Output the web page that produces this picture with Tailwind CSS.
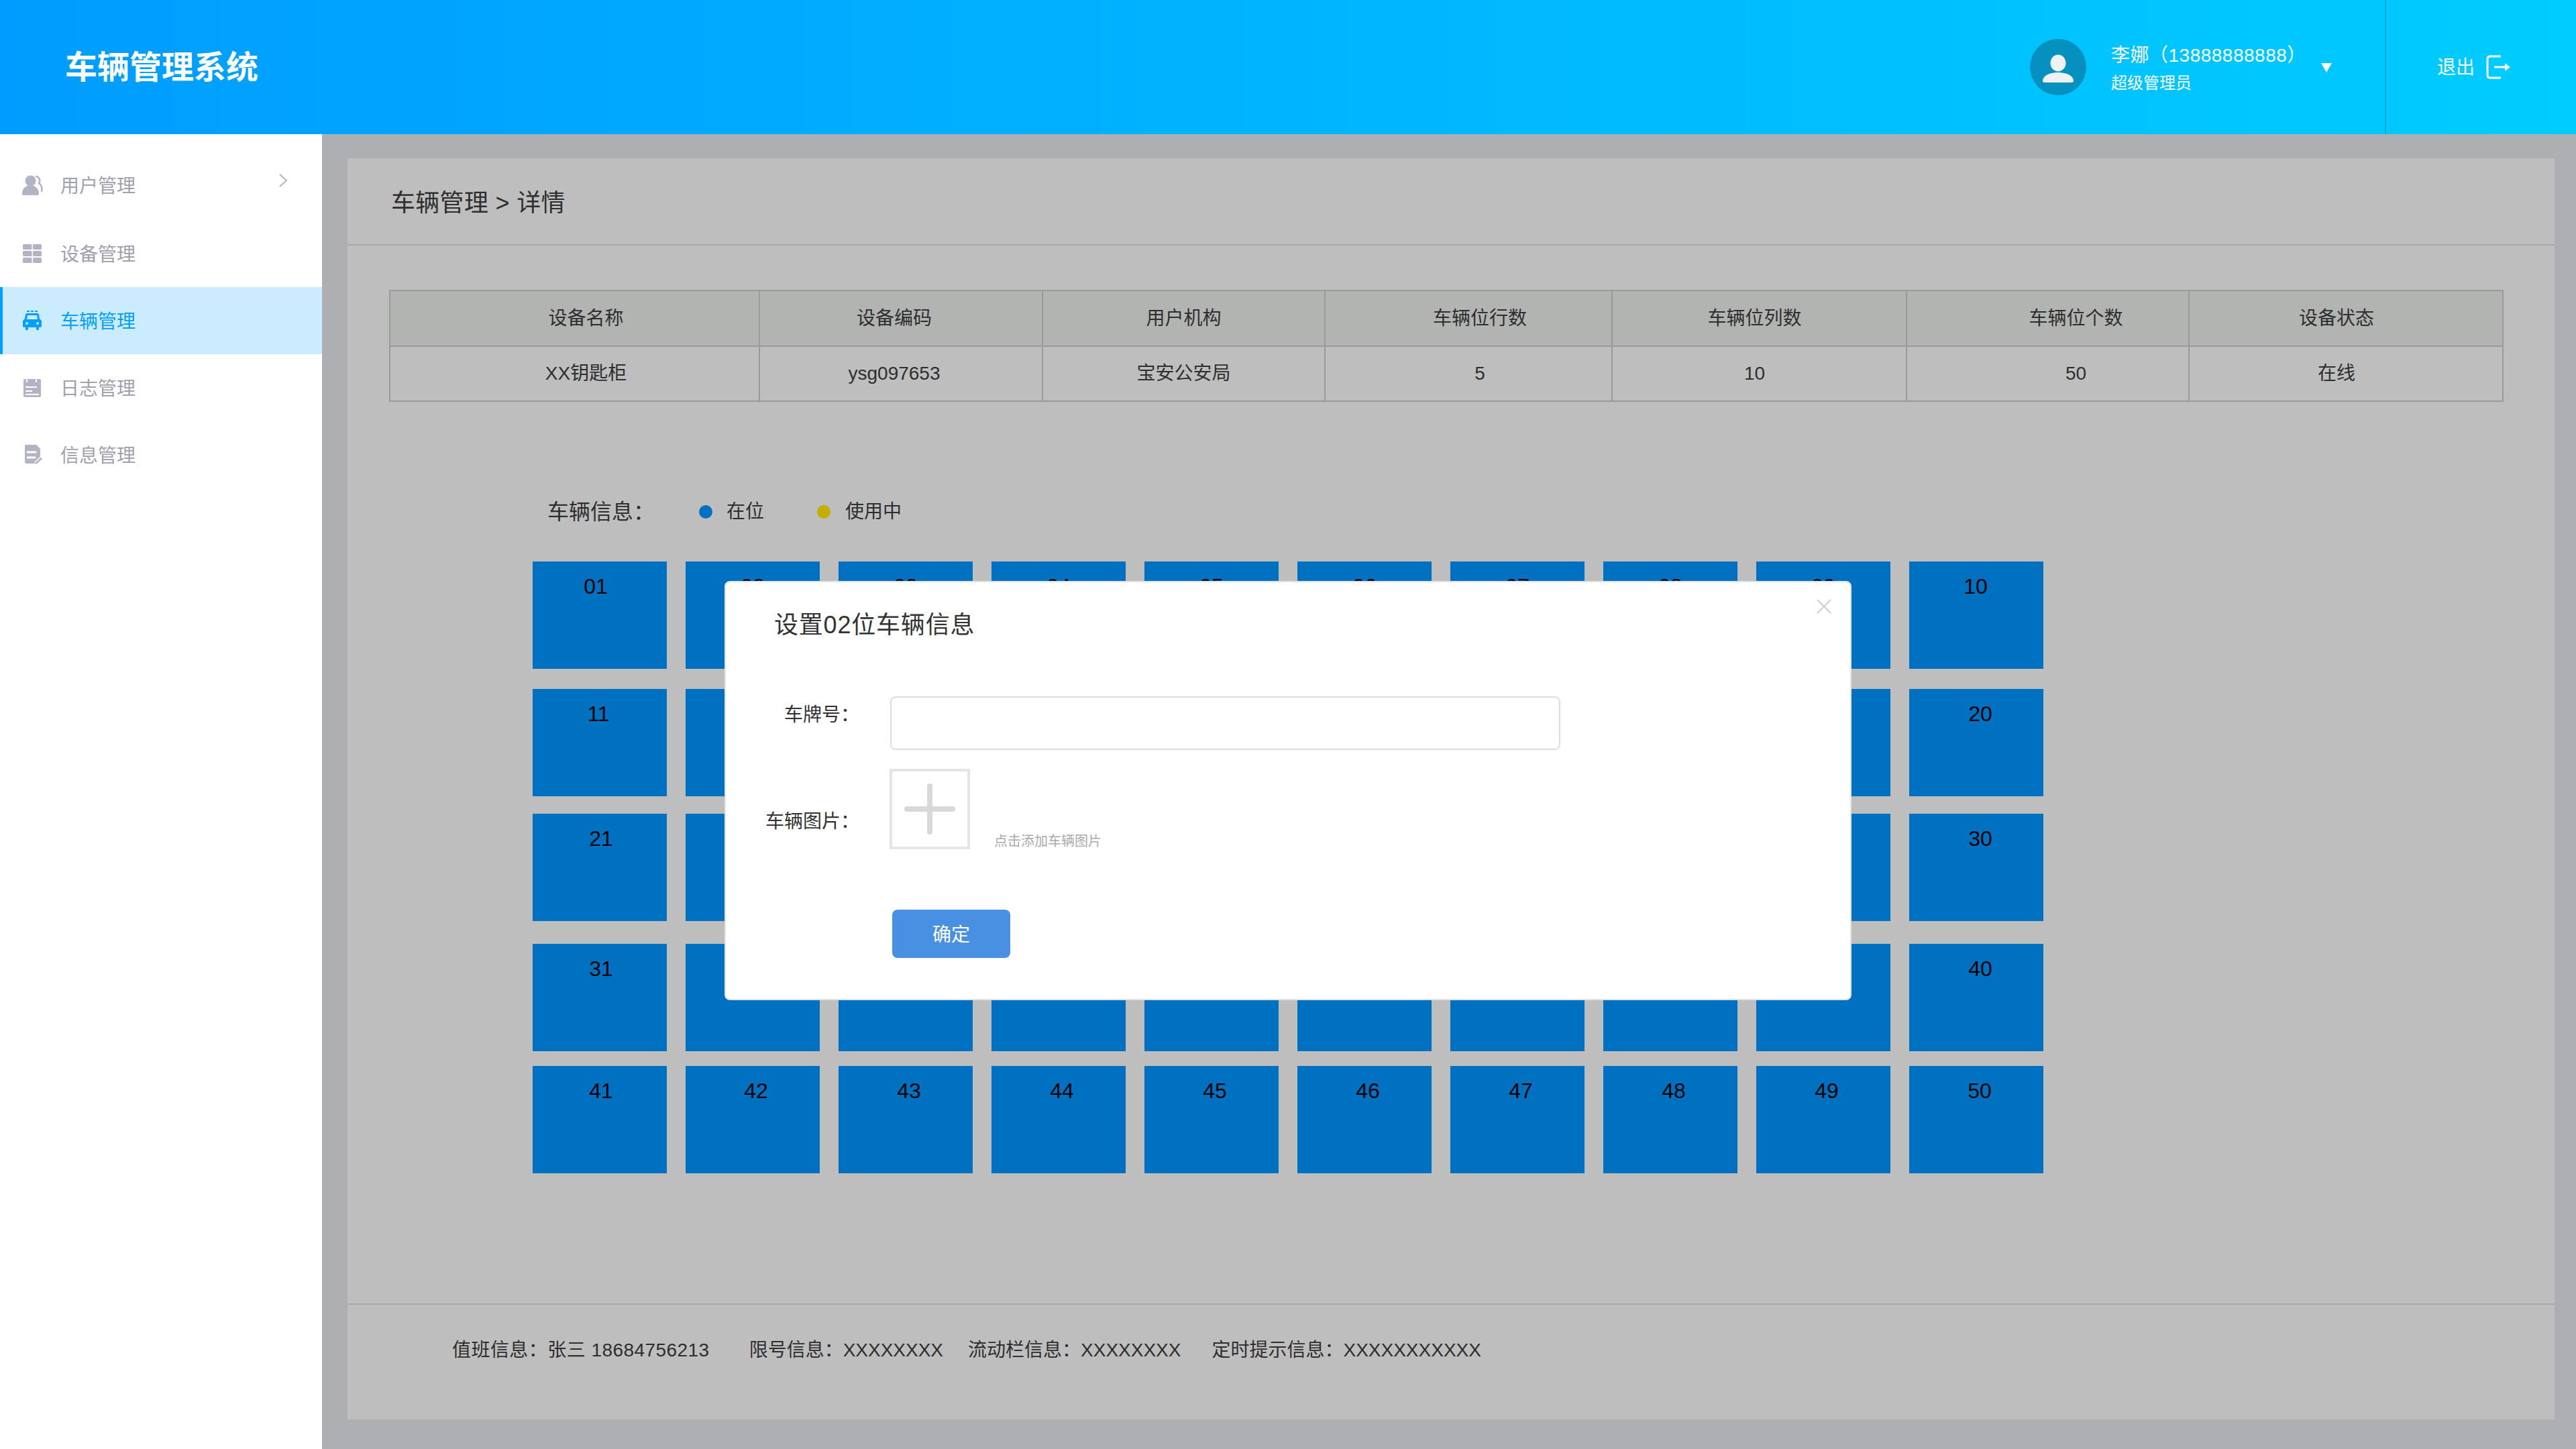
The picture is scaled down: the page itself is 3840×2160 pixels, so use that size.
<!DOCTYPE html>
<html lang="zh-CN">
<head>
  <meta charset="UTF-8" />
  <title>车辆管理系统</title>
  <script src="https://cdn.jsdelivr.net/npm/@tailwindcss/browser@4"></script>
</head>
<body class="relative w-[3840px] h-[2160px] overflow-hidden flex flex-col bg-[#aeafb3] text-[#2e2e2e] font-['Liberation_Sans','Noto_Sans_CJK_SC',sans-serif]">

  <!-- header -->
  <header class="h-[200px] shrink-0 flex items-center bg-gradient-to-r from-[#009cff] to-[#00ccff] text-white">
    <h1 class="ml-[97px] mt-[2px] text-[48px] font-bold leading-[60px]">车辆管理系统</h1>
    <div class="ml-auto flex items-center">
      <div class="w-[84px] h-[84px] rounded-full bg-[#0690bf] flex items-center justify-center">
        <svg class="w-[84px] h-[84px]" viewBox="0 0 84 84" fill="#eef2f5">
          <ellipse cx="42" cy="36" rx="11.5" ry="12.5"/>
          <path d="M19 63c0-8 10-13 23-13s23 5 23 13c0 1-1 2-4 2H23c-3 0-4-1-4-2z"/>
        </svg>
      </div>
      <div class="ml-[37px] w-[313px] pt-[5px]">
        <div class="text-[28px] leading-[36px] tracking-[0.5px]">李娜（13888888888）</div>
        <div class="text-[24px] leading-[32px] mt-[7px]">超级管理员</div>
      </div>
      <svg class="w-[16px] h-[14px] mr-[79px] mt-[2px]" viewBox="0 0 16 14" fill="white"><path d="M0 0h16L8 14z"/></svg>
    </div>
    <div class="h-full w-[285px] border-l-2 border-[#10a9cc] pl-[76px] flex items-center">
      <span class="text-[28px] leading-[36px] mt-[2px]">退出</span>
      <svg class="ml-[17px] w-[38px] h-[36px]" viewBox="0 0 38 36" fill="none" stroke="white" stroke-width="3">
        <path d="M22 2H6Q2 2 2 6v24q0 4 4 4h16"/>
        <path d="M12 18h20"/>
        <path d="M28 12l8 6-8 6z" fill="white" stroke="none"/>
      </svg>
    </div>
  </header>

  <div class="flex-1 flex min-h-0">
    <!-- sidebar -->
    <aside class="w-[480px] shrink-0 bg-white pt-[26px] text-[28px] text-[#a0a0ae]">
      <a class="relative h-[100px] mb-[2px] pl-[32px] flex items-center">
        <svg class="w-[32px] h-[32px]" viewBox="0 0 32 32" fill="#b2b3c4">
          <circle cx="13.5" cy="9.5" r="8"/>
          <path d="M1 29c0-6 3-10 8-12h9c5 2 8 6 8 12 0 1-1 2-2 2H3c-1 0-2-1-2-2z"/>
          <path d="M21 3c5 0 8 5 5 10 3 2 5 7 4 13" fill="none" stroke="#b2b3c4" stroke-width="2.500"/>
        </svg>
        <span class="ml-[26px] mt-[3px]">用户管理</span>
        <svg class="absolute left-[415px] top-[32px] w-[14px] h-[22px]" viewBox="0 0 14 22" fill="none" stroke="#b4b4c4" stroke-width="2"><path d="M2 2l10 9-10 9"/></svg>
      </a>
      <a class="h-[100px] pl-[32px] flex items-center">
        <svg class="w-[32px] h-[32px]" viewBox="0 0 32 32" fill="#b2b3c4">
          <rect x="2" y="2" width="13.500" height="8" rx="1.500"/><rect x="17" y="2" width="13" height="8" rx="1.500"/>
          <rect x="2" y="12" width="13.500" height="8" rx="1.500"/><rect x="17" y="12" width="13" height="8" rx="1.500"/>
          <rect x="2" y="22" width="13.500" height="8" rx="1.500"/><rect x="17" y="22" width="13" height="8" rx="1.500"/>
        </svg>
        <span class="ml-[26px] mt-[3px]">设备管理</span>
      </a>
      <a class="h-[100px] border-l-4 border-[#019fff] bg-[#cbecff] pl-[28px] flex items-center text-[#019fff]">
        <svg class="w-[32px] h-[32px]" viewBox="0 0 32 32" fill="#019fff">
          <path d="M8 1h4v2H8zM14 1h4v2h-4zM20 1h4v2h-4z"/>
          <path d="M8 5h16c1 0 2 1 2 2l1 6 2 2c1 1 1 2 1 3v6c0 1-1 2-2 2H4c-1 0-2-1-2-2v-6c0-1 0-2 1-3l2-2 1-6c0-1 1-2 2-2zm1 3l-1 6h16l-1-6z"/>
          <rect x="6" y="26" width="4" height="4" rx="1"/><rect x="22" y="26" width="4" height="4" rx="1"/>
          <circle cx="8" cy="20" r="2" fill="#cbecff"/><circle cx="24" cy="20" r="2" fill="#cbecff"/>
        </svg>
        <span class="ml-[26px] mt-[3px]">车辆管理</span>
      </a>
      <a class="h-[100px] pl-[32px] flex items-center">
        <svg class="w-[32px] h-[32px]" viewBox="0 0 32 32" fill="#b2b3c4">
          <rect x="3" y="3" width="26" height="27" rx="2"/>
          <path d="M8 2v6M22 2v6" stroke="white" stroke-width="2"/>
          <path d="M6 15h17M6 21h10M6 26h20" stroke="white" stroke-width="2"/>
        </svg>
        <span class="ml-[26px] mt-[3px]">日志管理</span>
      </a>
      <a class="h-[100px] pl-[32px] flex items-center">
        <svg class="w-[32px] h-[32px]" viewBox="0 0 32 32" fill="#b2b3c4">
          <path d="M7 1h15l6 6v13l-8 9H7c-1 0-2-1-2-2V3c0-1 1-2 2-2z"/>
          <path d="M9 12h12M9 20h11" stroke="white" stroke-width="3" stroke-linecap="round"/>
          <path d="M21 29l9-8" stroke="white" stroke-width="6"/>
          <path d="M21 29l9-8" stroke="#b2b3c4" stroke-width="3"/>
        </svg>
        <span class="ml-[26px] mt-[3px]">信息管理</span>
      </a>
    </aside>

    <!-- main -->
    <main class="flex-1 pt-[36px] pl-[38px] pr-[32px] pb-[44px]">
      <div class="h-full bg-[#bebebe] flex flex-col">
        <div class="h-[130px] shrink-0 border-b-2 border-[#a8a8a8] pl-[65px] pt-[6px] flex items-center text-[36px] tracking-[0.3px]">车辆管理 &gt; 详情</div>

        <div class="flex-1 min-h-0">
          <!-- column labels in the source are not centred, hence the odd paddings -->
          <table class="ml-[62px] mt-[66px] w-[3150px] table-fixed border-collapse text-[28px] text-center">
            <colgroup>
              <col class="w-[551px]"><col class="w-[422px]"><col class="w-[421px]"><col class="w-[428px]"><col class="w-[439px]"><col class="w-[421px]"><col class="w-[468px]">
            </colgroup>
            <thead>
              <tr class="h-[83px] bg-[#b2b4b2]">
                <th class="border-2 border-[#9a9a9a] font-normal pl-[34px]">设备名称</th>
                <th class="border-2 border-[#9a9a9a] font-normal pr-[20px]">设备编码</th>
                <th class="border-2 border-[#9a9a9a] font-normal">用户机构</th>
                <th class="border-2 border-[#9a9a9a] font-normal pl-[34px]">车辆位行数</th>
                <th class="border-2 border-[#9a9a9a] font-normal pr-[14px]">车辆位列数</th>
                <th class="border-2 border-[#9a9a9a] font-normal pl-[84px]">车辆位个数</th>
                <th class="border-2 border-[#9a9a9a] font-normal pr-[28px]">设备状态</th>
              </tr>
            </thead>
            <tbody>
              <tr class="h-[82px]">
                <td class="border-2 border-[#9a9a9a] pl-[34px]">XX钥匙柜</td>
                <td class="border-2 border-[#9a9a9a] pr-[20px]">ysg097653</td>
                <td class="border-2 border-[#9a9a9a]">宝安公安局</td>
                <td class="border-2 border-[#9a9a9a] pl-[34px]">5</td>
                <td class="border-2 border-[#9a9a9a] pr-[14px]">10</td>
                <td class="border-2 border-[#9a9a9a] pl-[84px]">50</td>
                <td class="border-2 border-[#9a9a9a] pr-[28px]">在线</td>
              </tr>
            </tbody>
          </table>

          <div class="ml-[298px] mt-[144px] h-[40px] flex items-center text-[28px]">
            <span class="w-[226px] text-[32px] leading-[40px]">车辆信息：</span>
            <span class="w-[20px] h-[20px] rounded-full bg-[#0071c1]"></span>
            <span class="ml-[21px] w-[135px]">在位</span>
            <span class="w-[20px] h-[20px] rounded-full bg-[#c4ae00]"></span>
            <span class="ml-[22px]">使用中</span>
          </div>

          <div id="slots" class="ml-[276px] mt-[54px]"></div>
        </div>

        <div class="h-[173px] shrink-0 border-t-2 border-[#a8a8a8] pl-[156px] pt-[48px] flex items-start text-[28px] leading-[40px]">
          <span class="tracking-[0.45px]">值班信息：张三 18684756213</span>
          <span class="ml-[59px]">限号信息：XXXXXXXX</span>
          <span class="ml-[37px]">流动栏信息：XXXXXXXX</span>
          <span class="ml-[46px]">定时提示信息：XXXXXXXXXXX</span>
        </div>
      </div>
    </main>
  </div>

  <!-- dialog -->
  <div class="absolute left-[1080px] top-[866px] w-[1680px] h-[625px] bg-white rounded-lg border-2 border-[#e4e4e4] text-[#333]">
    <svg class="absolute right-[28px] top-[25px] w-[22px] h-[22px]" viewBox="0 0 22 22" stroke="#d0d0d0" stroke-width="2"><path d="M1 1l20 20M21 1L1 21"/></svg>
    <h2 class="pl-[72px] pt-[39px] text-[36px] leading-[50px] font-normal tracking-[0.8px]">设置02位车辆信息</h2>
    <div class="mt-[81px] flex">
      <label class="w-[199px] mt-[8px] text-right text-[28px] leading-[40px]">车牌号：</label>
      <input class="ml-[46px] w-[999px] h-[80px] border-2 border-[#ddd] rounded-lg bg-white" />
    </div>
    <div class="mt-[28px] flex">
      <label class="w-[199px] mt-[59px] text-right text-[28px] leading-[40px]">车辆图片：</label>
      <div class="ml-[45px] w-[120px] h-[120px] border-4 border-[#e5e5e5] flex items-center justify-center">
        <svg class="w-[76px] h-[76px]" viewBox="0 0 76 76" fill="#d8d8d8"><rect y="34" width="76" height="8" rx="4"/><rect x="34" width="8" height="76" rx="4"/></svg>
      </div>
      <span class="ml-[36px] self-end -mb-[2px] text-[20px] leading-[28px] text-[#aaa]">点击添加车辆图片</span>
    </div>
    <button class="block ml-[248px] mt-[90px] w-[176px] h-[72px] pt-[3px] rounded-lg bg-[#4a90e2] text-white text-[28px]">确定</button>
  </div>

  <script>
    // row spacing in the layout is not even, so each row carries its own margin
    const rowGaps = ["", "mt-[30px]", "mt-[26px]", "mt-[34px]", "mt-[22px]"];
    // the numbers sit a little off-centre, per row and a few one-offs
    const rowShift = [0, 6, 6, 6, 5];
    const oneOffs = { 1: -6, 10: -1, 11: -2, 21: 2, 31: 2, 41: 2 };
    let html = "";
    rowGaps.forEach((gap, r) => {
      html += `<div class="flex gap-[28px] ${gap}">`;
      for (let c = 1; c <= 10; c++) {
        const n = r * 10 + c;
        const shift = oneOffs[n] ?? rowShift[r];
        html += `<div class="w-[200px] h-[160px] bg-[#0071c1] pt-[17px] text-center text-[32px] leading-[40px] text-black"><span class="inline-block" style="transform:translateX(${shift}px)">${String(n).padStart(2, "0")}</span></div>`;
      }
      html += "</div>";
    });
    document.getElementById("slots").innerHTML = html;
  </script>
</body>
</html>
